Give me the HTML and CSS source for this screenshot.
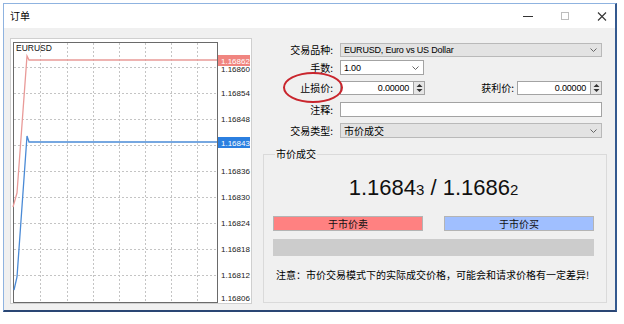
FILE: index.html
```html
<!DOCTYPE html>
<html lang="zh-CN">
<head>
    <meta charset="UTF-8">
    <title>订单</title>
    <link rel="stylesheet" href="styles.css">
</head>
<body>
    <div class="window">
        <div class="titlebar">
            <span class="title">订单</span>
            <div class="caption">
                <span class="cap cap-min"></span>
                <span class="cap cap-max"></span>
                <svg class="cap" width="9" height="9" viewBox="0 0 9 9"><path d="M0.5 0.5L8.5 8.5M8.5 0.5L0.5 8.5" stroke="#333" stroke-width="1.1"/></svg>
            </div>
        </div>

        <div class="client">
            <div class="chart-panel">
                <svg width="240" height="264" viewBox="0 0 240 264">
                    <g stroke="#c4c4c4" stroke-dasharray="2 2" stroke-width="1">
                        <path d="M29.5 4V263M56.5 4V263M82.5 4V263M108.5 4V263M134.5 4V263M160.5 4V263M186.5 4V263"/>
                        <path d="M3 28.5H206M3 54.5H206M3 80.5H206M3 106.5H206M3 132.5H206M3 158.5H206M3 184.5H206M3 210.5H206M3 236.5H206"/>
                    </g>
                    <rect x="2.5" y="3.5" width="204" height="260" fill="none" stroke="#6a6a6a"/>
                    <polyline points="2,168 6,154 16,17 18,21 206,21" fill="none" stroke="#e99a98" stroke-width="1.3"/>
                    <polyline points="3,251 6,238 16,97 18,103 206,103" fill="none" stroke="#4a8ad6" stroke-width="1.3"/>
                    <text x="5" y="12" class="sym">EURUSD</text>
                    <g class="axis">
                        <text x="210" y="33">1.16860</text>
                        <text x="210" y="57">1.16854</text>
                        <text x="210" y="83">1.16848</text>
                        <text x="210" y="135">1.16836</text>
                        <text x="210" y="161">1.16830</text>
                        <text x="210" y="187">1.16824</text>
                        <text x="210" y="213">1.16818</text>
                        <text x="210" y="239">1.16812</text>
                        <text x="210" y="262">1.16806</text>
                    </g>
                    <rect x="207" y="16" width="32" height="11" fill="#f08580"/>
                    <text x="210" y="25" class="tag">1.16862</text>
                    <rect x="207" y="98" width="32" height="11" fill="#2b7fe0"/>
                    <text x="210" y="107" class="tag">1.16843</text>
                </svg>
            </div>

            <div class="order-panel">
                <div class="row r1">
                    <label>交易品种:</label>
                    <div class="field select grey grow">
                        <span>EURUSD, Euro vs US Dollar</span>
                        <svg width="7" height="4" viewBox="0 0 7 4"><path d="M0.5 0.5L3.5 3.5L6.5 0.5" fill="none" stroke="#666"/></svg>
                    </div>
                </div>
                <div class="row r2">
                    <label>手数:</label>
                    <div class="field select lots">
                        <span>1.00</span>
                        <svg width="7" height="4" viewBox="0 0 7 4"><path d="M0.5 0.5L3.5 3.5L6.5 0.5" fill="none" stroke="#666"/></svg>
                    </div>
                </div>
                <div class="row r3">
                    <label class="marked">止损价:<span class="circle"></span></label>
                    <div class="spin">
                        <div class="field num">0.00000</div>
                        <div class="arrows">
                            <svg width="7" height="10" viewBox="0 0 7 10"><path d="M0.5 4L3.5 1L6.5 4Z M0.5 6L3.5 9L6.5 6Z" fill="#333"/></svg>
                        </div>
                    </div>
                    <label class="second">获利价:</label>
                    <div class="spin">
                        <div class="field num">0.00000</div>
                        <div class="arrows">
                            <svg width="7" height="10" viewBox="0 0 7 10"><path d="M0.5 4L3.5 1L6.5 4Z M0.5 6L3.5 9L6.5 6Z" fill="#333"/></svg>
                        </div>
                    </div>
                </div>
                <div class="row r4">
                    <label>注释:</label>
                    <div class="field grow"></div>
                </div>
                <div class="row r5">
                    <label>交易类型:</label>
                    <div class="field select grey grow">
                        <span class="cjk">市价成交</span>
                        <svg width="7" height="4" viewBox="0 0 7 4"><path d="M0.5 0.5L3.5 3.5L6.5 0.5" fill="none" stroke="#666"/></svg>
                    </div>
                </div>

                <fieldset class="market">
                    <legend>市价成交</legend>
                    <div class="quote">1.1684<small>3</small> / 1.1686<small>2</small></div>
                    <div class="buttons">
                        <button class="sell">于市价卖</button>
                        <button class="buy">于市价买</button>
                    </div>
                    <div class="bar"></div>
                    <p class="note">注意：市价交易模式下的实际成交价格，可能会和请求价格有一定差异!</p>
                </fieldset>
            </div>
        </div>
    </div>
</body>
</html>
```

FILE: styles.css
```css
*{
    margin: 0;
    box-sizing: border-box;
}
body
{
    margin: 0;
    background: #fff;
    font-family: "Liberation Sans", "Noto Sans CJK SC", sans-serif;
    font-size: 10px;
    color: #000;
}
.window
{
    margin: 3px 0 0 3px;
    width: 614px;
    height: 309px;
    display: flex;
    flex-direction: column;
    background: #f0f0f0;
    border-left: 1px solid #8fb3e0;
    border-top: 1px solid #8fb3e0;
    border-right: 2px solid #34598f;
    border-bottom: 2px solid #2a4674;
}
.titlebar
{
    height: 24px;
    flex: none;
    display: flex;
    align-items: center;
    background: #fff;
    padding-left: 6px;
}
.title
{
    font-family: "Noto Sans CJK SC", sans-serif;
    font-size: 10px;
    line-height: 12px;
}
.caption
{
    margin-left: auto;
    display: flex;
    align-items: center;
    gap: 28px;
    padding-right: 8px;
}
.cap
{
    display: block;
    width: 10px;
    height: 9px;
}
.cap-min
{
    border-bottom: 1px solid #333;
    height: 5px;
    margin-bottom: 4px;
}
.cap-max
{
    width: 8px;
    height: 8px;
    border: 1px solid #bdbdbd;
}
.client
{
    flex: 1;
    display: flex;
    padding: 10px 0 0 6px;
}
.chart-panel
{
    width: 242px;
    height: 266px;
    background: #fff;
    border: 1px solid #cfcfcf;
}
.chart-panel svg
{
    display: block;
}
.sym
{
    font-family: "Liberation Sans", sans-serif;
    font-size: 8.5px;
    fill: #111;
}
.axis text
{
    font-family: "Liberation Sans", sans-serif;
    font-size: 8px;
    fill: #222;
}
.tag
{
    font-family: "Liberation Sans", sans-serif;
    font-size: 8px;
    fill: #fff;
}
.order-panel
{
    width: 346px;
    margin-left: 10px;
    padding-top: 5px;
    display: flex;
    flex-direction: column;
}
.row
{
    display: flex;
    align-items: center;
    height: 15px;
    padding-right: 6px;
}
.r1
{
    height: 14px;
    margin-bottom: 3px;
}
.r2
{
    margin-bottom: 6px;
}
.r3
{
    height: 14px;
    margin-bottom: 7px;
}
.r4
{
    margin-bottom: 6px;
}
label
{
    width: 71px;
    flex: none;
    text-align: right;
    margin-right: 7px;
    font-family: "Noto Sans CJK SC", sans-serif;
    font-size: 10px;
    line-height: 12px;
}
.marked
{
    position: relative;
}
.circle
{
    position: absolute;
    left: 21px;
    top: -10px;
    width: 60px;
    height: 31px;
    border: 2px solid #c9252d;
    border-radius: 50%;
}
.second
{
    width: auto;
    flex: 1;
    margin-right: 3px;
}
.field
{
    height: 100%;
    background: #fff;
    border: 1px solid #a3a3a3;
    display: flex;
    align-items: center;
    padding: 0 3px;
    font-size: 9px;
    letter-spacing: -0.2px;
}
.grow
{
    flex: 1;
}
.select
{
    justify-content: space-between;
    padding-right: 4px;
}
.grey
{
    background: #e3e3e3;
    border-color: #b9b9b9;
}
.lots
{
    width: 84px;
}
.cjk
{
    font-family: "Noto Sans CJK SC", sans-serif;
    font-size: 10px;
    letter-spacing: 0;
}
.spin
{
    display: flex;
    height: 100%;
    width: 85px;
}
.num
{
    flex: 1;
    justify-content: flex-end;
    padding-right: 4px;
    border-right: none;
}
.arrows
{
    width: 12px;
    border: 1px solid #a3a3a3;
    background: #e6e6e6;
    display: flex;
    align-items: center;
    justify-content: center;
}
.market
{
    margin-top: 9px;
    margin-left: 1px;
    width: 344px;
    height: 156px;
    border: 1px solid #dadada;
    padding: 0 12px 0 9px;
}
.market legend
{
    margin-left: 2px;
    padding: 0 1px;
    font-family: "Noto Sans CJK SC", sans-serif;
    font-size: 10px;
    line-height: 14px;
}
.quote
{
    margin-top: 14px;
    text-align: center;
    font-family: "Liberation Sans", sans-serif;
    font-size: 22px;
    line-height: 26px;
    color: #111;
}
.quote small
{
    font-size: 15px;
}
.buttons
{
    margin-top: 13px;
    display: flex;
    justify-content: space-between;
}
button
{
    width: 150px;
    height: 15px;
    padding: 0;
    border: 1px solid #b4b4b4;
    font-family: "Noto Sans CJK SC", sans-serif;
    font-size: 10px;
    line-height: 12px;
    color: #111;
}
.sell
{
    background: #ff8181;
}
.buy
{
    background: #a0bfff;
}
.bar
{
    margin-top: 8px;
    height: 17px;
    background: #cccccc;
}
.note
{
    margin-top: 12px;
    padding-left: 3px;
    font-family: "Noto Sans CJK SC", sans-serif;
    font-size: 10px;
    line-height: 14px;
}
```
